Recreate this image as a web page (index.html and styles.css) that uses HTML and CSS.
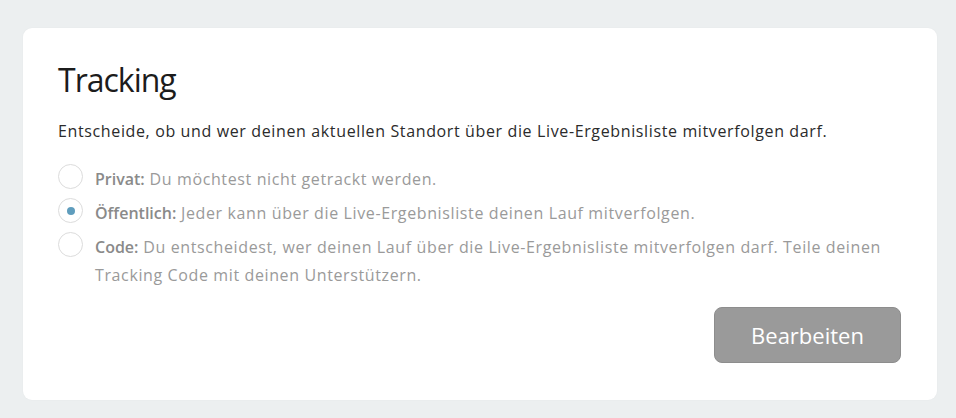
FILE: index.html
```html
<!DOCTYPE html>
<html lang="de">
<head>
<meta charset="UTF-8">
<meta name="viewport" content="width=device-width, initial-scale=1.0">
<title>Tracking</title>
<link rel="stylesheet" href="styles.css">
</head>
<body>

<section class="card">
    <h1>Tracking</h1>
    <p class="intro">Entscheide, ob und wer deinen aktuellen Standort über die Live-Ergebnisliste mitverfolgen darf.</p>

    <form class="options">
        <label class="option">
            <input type="radio" name="tracking" value="privat">
            <span class="radio"></span>
            <span class="text"><strong>Privat:</strong> Du möchtest nicht getrackt werden.</span>
        </label>
        <label class="option">
            <input type="radio" name="tracking" value="public" checked>
            <span class="radio"></span>
            <span class="text"><strong>Öffentlich:</strong> Jeder kann über die Live-Ergebnisliste deinen Lauf mitverfolgen.</span>
        </label>
        <label class="option">
            <input type="radio" name="tracking" value="code">
            <span class="radio"></span>
            <span class="text"><strong>Code:</strong> Du entscheidest, wer deinen Lauf über die Live-Ergebnisliste mitverfolgen darf. Teile deinen Tracking Code mit deinen Unterstützern.</span>
        </label>
    </form>

    <div class="actions">
        <button class="btn" type="button">Bearbeiten</button>
    </div>
</section>

</body>
</html>
```

FILE: styles.css
```css
body {
    font-family: "Open Sans", "Noto Sans", sans-serif;
    background-color: #eceff0;
    margin: 0;
    padding: 28px 19px 18px 23px;
}

.card {
    background-color: #ffffff;
    border-radius: 9px;
    padding: 32px 36px 37px 35px;
    box-shadow: 0 0 2px rgba(0, 0, 0, 0.04);
}

.card h1 {
    font-size: 32px;
    font-weight: 500;
    letter-spacing: -1px;
    color: #1c1c1c;
    margin: 0 0 20px 0;
    line-height: 40px;
}

.intro {
    font-size: 16px;
    letter-spacing: 0.63px;
    color: #2b2b2b;
    margin: 0 0 23px 0;
    line-height: 22px;
}

.options {
    display: flex;
    flex-direction: column;
    gap: 6px;
}

.option {
    display: flex;
    align-items: flex-start;
    gap: 12px;
    font-size: 16px;
    letter-spacing: 0.62px;
    line-height: 28px;
    color: #9a9a9a;
    cursor: pointer;
}

.option input {
    display: none;
}

.option .radio {
    flex: none;
    width: 25px;
    height: 25px;
    margin-top: -1px;
    border: 1px solid #dcdcdc;
    border-radius: 50%;
    box-sizing: border-box;
    display: flex;
    align-items: center;
    justify-content: center;
}

.option input:checked + .radio::after {
    content: "";
    width: 8px;
    height: 8px;
    border-radius: 50%;
    background-color: #5f9dbd;
}

.option strong {
    font-weight: 600;
    letter-spacing: 0;
    color: #8a8a8a;
}

.actions {
    display: flex;
    justify-content: flex-end;
    margin-top: 18px;
}

.btn {
    font-family: inherit;
    width: 187px;
    height: 56px;
    font-size: 22px;
    color: #ffffff;
    background-color: #9a9a9a;
    border: 1px solid #8d8d8d;
    border-radius: 8px;
    cursor: pointer;
}
```
